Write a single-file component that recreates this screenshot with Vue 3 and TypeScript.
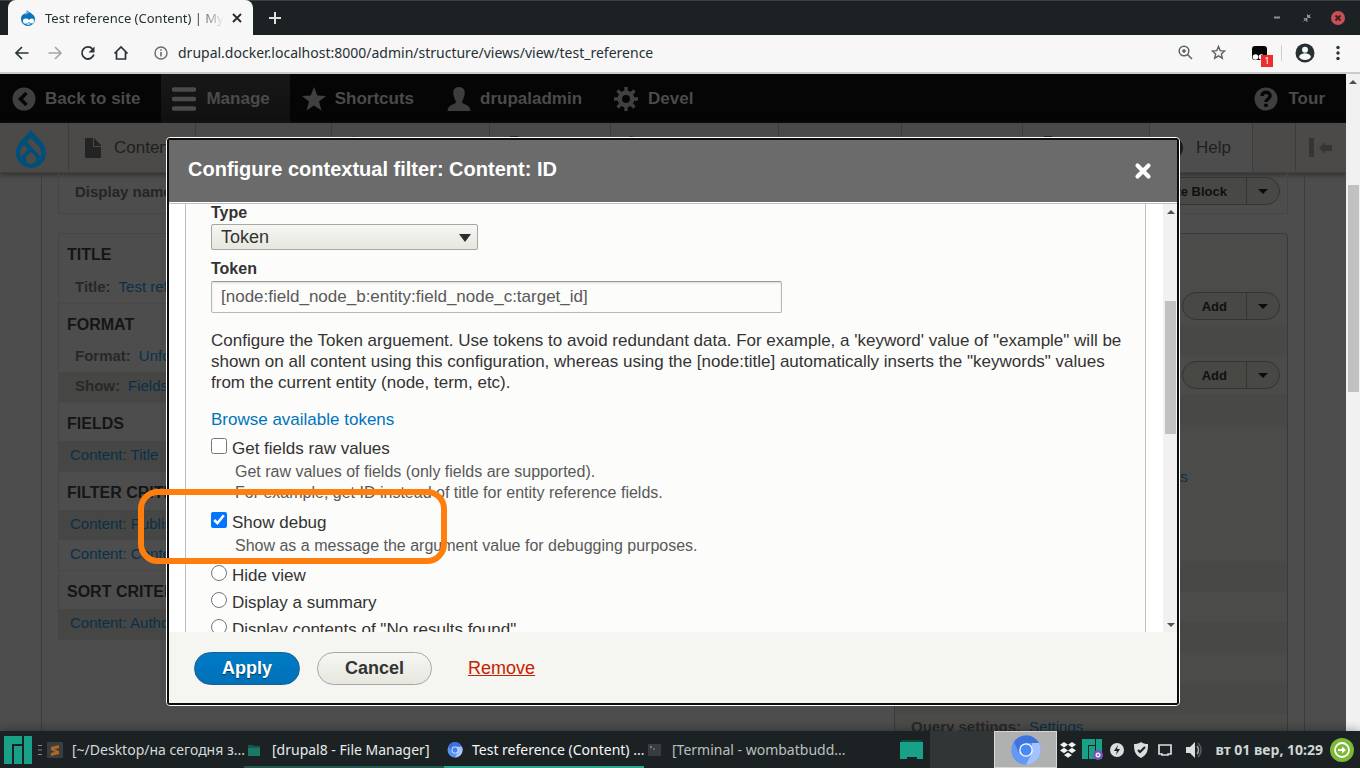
<script setup lang="ts">
import { ref } from 'vue'

interface Row { label?: string; link: string; shaded?: boolean }
interface Bucket { title: string; rows: Row[] }
interface Task { id: string; title: string; state: string }
interface TrayIcon { width: string; path: string }

const trayIcons: TrayIcon[] = [
  { width: 'w136', path: 'M7 3h6v5H7zM2 15h6v6H2zM12 15h6v6h-6zM9 8h2v7H9z' },
  { width: 'w158', path: 'M8 0l3 3 6 7-7 8-8-8z' },
  { width: 'w121', path: 'M6 0h8v4h5v17H1V4h5z' },
  { width: 'w168', path: 'M5 0c4 0 6 3 5 6l9 12-3 4L5 10C1 10 0 6 2 4l3 2z' },
  { width: 'w123', path: 'M10 1c5 0 5 8 2 11l7 4v5H1v-5l7-4C5 9 5 1 10 1z' },
  { width: 'w121', path: 'M2 9h4v12H2zM8 1h4v20H8zM14 5h4v16h-4z' },
  { width: 'w127', path: 'M7 0h8v4l4 4v13H1V8l6-4z' },
]

const buckets: Bucket[] = [
  { title: 'TITLE', rows: [{ label: 'Title:', link: 'Test reference' }] },
  {
    title: 'FORMAT',
    rows: [
      { label: 'Format:', link: 'Unformatted' },
      { label: 'Show:', link: 'Fields', shaded: true },
    ],
  },
  { title: 'FIELDS', rows: [{ link: 'Content: Title', shaded: true }] },
  {
    title: 'FILTER CRITERIA',
    rows: [{ link: 'Content: Published', shaded: true }, { link: 'Content: Content' }],
  },
  { title: 'SORT CRITERIA', rows: [{ link: 'Content: Authored', shaded: true }] },
]

const tasks: Task[] = [
  { id: 'sublime', title: '[~/Desktop/на сегодня з...', state: '' },
  { id: 'files', title: '[drupal8 - File Manager]', state: 'open' },
  { id: 'chromium', title: 'Test reference (Content) ...', state: 'active' },
  { id: 'terminal', title: '[Terminal - wombatbudd...', state: 'faded' },
]

const url = ref('drupal.docker.localhost:8000/admin/structure/views/view/test_reference')
const argumentType = ref('Token')
const token = ref('[node:field_node_b:entity:field_node_c:target_id]')
const rawValues = ref(false)
const showDebug = ref(true)
const fallback = ref('')
</script>

<template>
  <div class="screen">
    <header class="tabs">
      <div class="tab">
        <svg class="favicon" width="16" height="18" viewBox="0 0 16 18">
          <path d="M7 1c1 2 3 2 5 4 2 1 3 3 3 5a7 7 0 0 1-14 0c0-3 1-4 3-5s3-2 3-4z" fill="#0b73b9" />
          <path d="M7 1c0 2-1 3-3 4 2 1 4 0 5-2z" fill="#6fb7e4" />
          <path d="M3 12c0-3 4-3 6-1 2-2 5-2 5 1 0 4-4 2-5 1-2 2-6 3-6-1z" fill="#fff" />
          <path d="M6 15c2-1 4-1 5 0-2 1-4 1-5 0z" fill="#fff" />
        </svg>
        <span class="tab-title">Test reference (Content) | My</span>
        <button class="bare tab-close" aria-label="Close tab">
          <svg width="10" height="10" viewBox="0 0 10 10"><path d="M1 1l8 8M9 1L1 9" stroke="#222a2c" stroke-width="1.800" /></svg>
        </button>
      </div>
      <button class="bare new-tab" aria-label="New tab">
        <svg width="14" height="14" viewBox="0 0 14 14"><path d="M7 1v12M1 7h12" stroke="#dfe1e1" stroke-width="2" /></svg>
      </button>
      <div class="window-buttons">
        <button class="bare" aria-label="Minimize"><svg width="14" height="14" viewBox="0 0 14 14"><path d="M5 6.500h6" stroke="#8b9090" stroke-width="2" /></svg></button>
        <button class="bare" aria-label="Restore"><svg width="14" height="14" viewBox="0 0 14 14"><path d="M7.500 3.500v3h3zM4 7.500h3v3zM9 5l1.500-1.500M5 9l-1.500 1.500" fill="#8b9090" stroke="#8b9090" /></svg></button>
        <button class="bare" aria-label="Close"><svg width="14" height="14" viewBox="0 0 14 14"><circle cx="7" cy="7" r="7" fill="#c94f57" /><path d="M4.500 4.500l5 5M9.500 4.500l-5 5" stroke="#3a2225" stroke-width="2" /></svg></button>
      </div>
    </header>

    <nav class="address-bar">
      <button class="bare" aria-label="Back"><svg width="16" height="16" viewBox="0 0 16 16"><path d="M14.500 8H2M8 2L2 8l6 6" fill="none" stroke="#293437" stroke-width="1.700" /></svg></button>
      <button class="bare" aria-label="Forward"><svg width="16" height="16" viewBox="0 0 16 16"><path d="M1.500 8H14M8 2l6 6-6 6" fill="none" stroke="#a3a6a7" stroke-width="1.600" /></svg></button>
      <button class="bare" aria-label="Reload"><svg width="16" height="16" viewBox="0 0 16 16"><path d="M12.500 4A6 6 0 1 0 13.800 9.500" fill="none" stroke="#293437" stroke-width="1.800" /><path d="M14.500 1.500v6h-6z" fill="#293437" /></svg></button>
      <button class="bare" aria-label="Home"><svg width="16" height="16" viewBox="0 0 16 16"><path d="M1.500 8.500L8 2l6.500 6.500M3.500 7v7h9V7" fill="none" stroke="#293437" stroke-width="1.700" /></svg></button>
      <svg class="info" width="14" height="14" viewBox="0 0 14 14"><circle cx="7" cy="7" r="6" fill="none" stroke="#666c6e" stroke-width="1.400" /><path d="M7 3.200v1.500M7 6v4.500" stroke="#666c6e" stroke-width="1.600" /></svg>
      <input v-model="url" class="url" aria-label="Address" type="text" />
      <button class="bare zoom" aria-label="Zoom"><svg width="15" height="15" viewBox="0 0 15 15"><circle cx="6" cy="6" r="4.800" fill="none" stroke="#5b6163" stroke-width="1.500" /><path d="M9.500 9.500L14 14M6 4v4M4 6h4" stroke="#5b6163" stroke-width="1.500" /></svg></button>
      <button class="bare star" aria-label="Bookmark"><svg width="15" height="15" viewBox="0 0 15 15"><path d="M7.500 1.500l1.700 4.100 4.500.4-3.400 2.900 1 4.300-3.800-2.300-3.800 2.300 1-4.300L1.300 6l4.500-.4z" fill="none" stroke="#5b6163" stroke-width="1.400" /></svg></button>
      <button class="bare extension" aria-label="Extension, 1 notification">
        <svg width="16" height="16" viewBox="0 0 16 16"><rect x="1" y="1" width="15" height="14" rx="3" fill="#050505" /><circle cx="4.500" cy="12" r="2.800" fill="#fff" /><circle cx="10.500" cy="12" r="2.800" fill="#fff" /></svg>
        <span class="badge">1</span>
      </button>
      <span class="separator"></span>
      <button class="bare profile" aria-label="Profile"><svg width="20" height="20" viewBox="0 0 20 20"><circle cx="10" cy="10" r="9.500" fill="#263033" /><circle cx="10" cy="6.800" r="3" fill="#f7f7f7" /><path d="M4 14c1-5 11-5 12 0-2 4-10 4-12 0z" fill="#f7f7f7" /></svg></button>
      <button class="bare more" aria-label="Menu"><svg width="4" height="16" viewBox="0 0 4 16"><circle cx="2" cy="2.500" r="1.700" fill="#293437" /><circle cx="2" cy="8" r="1.700" fill="#293437" /><circle cx="2" cy="13.500" r="1.700" fill="#293437" /></svg></button>
    </nav>

    <div class="viewport">
      <div class="page">
        <nav class="admin-bar">
          <a href="#" class="back">
            <svg width="24" height="24" viewBox="0 0 24 24"><circle cx="12" cy="12" r="11.500" fill="#3f3f3f" /><path d="M14.500 6L8.500 12l6 6" fill="none" stroke="#050505" stroke-width="3.500" /></svg>
            Back to site
          </a>
          <a href="#" class="manage">
            <svg width="24" height="24" viewBox="0 0 24 24"><path d="M2 2.500h20M2 12h20M2 21.500h20" stroke="#4b4b4b" stroke-width="4.500" stroke-linecap="round" /></svg>
            Manage
          </a>
          <a href="#" class="shortcuts">
            <svg width="24" height="24" viewBox="0 0 24 24"><path d="M12 0l3.300 8.500 8.700.4-7 5.600 2.500 9L12 18.500 4.500 23.500l2.500-9L0 8.900l8.700-.4z" fill="#404040" /></svg>
            Shortcuts
          </a>
          <a href="#" class="user">
            <svg width="24" height="24" viewBox="0 0 24 24"><path d="M12 0c5 0 6.500 4 5.500 8-.5 3-2 5-2.500 7 1 3 8 2 8.500 9H.5C1 17 8 18 9 15c-.5-2-2-4-2.500-7C5.500 4 7 0 12 0z" fill="#3d3d3d" /></svg>
            drupaladmin
          </a>
          <a href="#" class="devel">
            <svg width="24" height="24" viewBox="0 0 24 24">
              <circle cx="12" cy="12" r="6.200" fill="none" stroke="#404040" stroke-width="4.500" />
              <path d="M12 0v5M12 19v5M0 12h5M19 12h5M3.500 3.500L7 7M17 17l3.500 3.500M3.500 20.500L7 17M17 7l3.500-3.500" stroke="#404040" stroke-width="3.400" />
            </svg>
            Devel
          </a>
          <a href="#" class="tour">
            <svg width="24" height="24" viewBox="0 0 24 24"><circle cx="12" cy="12" r="11.500" fill="#3f3f3f" /><path d="M8 9c0-5 8.500-5 8 0 0 3-4 3-4 6" fill="none" stroke="#050505" stroke-width="3.400" /><path d="M10.200 16.800h3.600v3h-3.600z" fill="#050505" /></svg>
            Tour
          </a>
        </nav>

        <nav class="tray">
          <a href="#" class="tray-logo" aria-label="Drupal">
            <svg width="32" height="40" viewBox="0 0 32 40">
              <path d="M16 0c1 6 15 11 15 24a15 15 0 0 1-30 0C1 11 15 6 16 0z" fill="#004f78" />
              <path d="M16 9c3 4 10 8 10 15v4L12 13z" fill="#4b4a48" />
              <path d="M9 16c-5 5-4 9-3 12l7-8z" fill="#4b4a48" />
              <path d="M16 23l4 4c3 4 0 8-4 8s-7-4-4-8z" fill="#4b4a48" />
            </svg>
          </a>
          <a href="#" class="tray-item content">
            <svg width="18" height="22" viewBox="0 0 18 22"><path d="M1 1h8v9h8v10a1 1 0 0 1-1 1H2a1 1 0 0 1-1-1z" fill="#232323" /><path d="M10 1l7 7v1h-7z" fill="#232323" /></svg>
            Content
          </a>
          <span v-for="(icon, index) in trayIcons" :key="index" class="tray-item icon-only" :class="icon.width">
            <svg width="20" height="24" viewBox="0 0 20 24"><path :d="icon.path" fill="#232323" /></svg>
          </span>
          <a href="#" class="tray-item help">
            <svg width="24" height="24" viewBox="0 0 24 24"><circle cx="12" cy="12" r="11" fill="#1c1c1c" /></svg>
            Help
          </a>
          <button class="bare orientation" aria-label="Vertical orientation"><svg width="24" height="20" viewBox="0 0 24 20"><path d="M0 0h5v19H0z" fill="#353535" /><path d="M10 10l6-6v3h7v6h-7v3z" fill="#353535" /></svg></button>
        </nav>

        <main class="paper">
          <div class="display-name">
            <strong>Display name:</strong>
            <div class="split"><button>Duplicate Block</button><button class="caret" aria-label="More actions"></button></div>
          </div>
          <div class="columns">
            <section class="left">
              <template v-for="bucket in buckets" :key="bucket.title">
                <h3>{{ bucket.title }}</h3>
                <div v-for="row in bucket.rows" :key="row.link" class="row" :class="{ shaded: row.shaded, labelled: row.label }">
                  <b v-if="row.label">{{ row.label }}</b><a href="#">{{ row.link }}</a>
                </div>
              </template>
            </section>
            <section class="right">
              <div class="head tall"><div class="split"><button>Add</button><button class="caret" aria-label="More actions"></button></div></div>
              <div class="row shaded"></div>
              <div class="head"><div class="split"><button>Add</button><button class="caret" aria-label="More actions"></button></div></div>
              <div class="row shaded"></div>
              <div class="head"></div>
              <div class="row tail"><a href="#">arguments</a></div>
              <div class="head"></div>
              <div class="row"></div>
              <div class="row shaded"></div>
              <div class="row"></div>
              <div class="row shaded"></div>
              <div class="row"></div>
              <div class="row shaded"></div>
              <div class="row query"><b>Query settings:</b><a href="#">Settings</a></div>
            </section>
          </div>
        </main>

        <section class="dialog" role="dialog" aria-labelledby="dialog-title">
          <div class="dialog-frame">
            <header class="dialog-title">
              <h2 id="dialog-title">Configure contextual filter: Content: ID</h2>
              <button class="bare" aria-label="Close"><svg width="18" height="18" viewBox="0 0 18 18"><path d="M3.500 3.500l11 11M14.500 3.500l-11 11" stroke="#fff" stroke-width="4.200" stroke-linecap="round" /></svg></button>
            </header>
            <div class="dialog-body">
              <form class="fields" @submit.prevent>
                <label class="field-label first" for="type">Type</label>
                <div class="select-wrap">
                  <select id="type" v-model="argumentType"><option>Token</option></select>
                </div>
                <label class="field-label" for="token">Token</label>
                <input id="token" v-model="token" class="token" type="text" />
                <p class="help-text">
                  Configure the Token arguement. Use tokens to avoid redundant data. For example, a 'keyword' value of "example" will be<br />
                  shown on all content using this configuration, whereas using the [node:title] automatically inserts the "keywords" values<br />
                  from the current entity (node, term, etc).
                </p>
                <a href="#" class="browse">Browse available tokens</a>
                <label class="option"><input v-model="rawValues" type="checkbox" />Get fields raw values</label>
                <p class="description">Get raw values of fields (only fields are supported).<br />For example, get ID instead of title for entity reference fields.</p>
                <label class="option after"><input v-model="showDebug" type="checkbox" />Show debug</label>
                <p class="description">Show as a message the argument value for debugging purposes.</p>
                <label class="option after"><input v-model="fallback" type="radio" name="fallback" value="hide" />Hide view</label>
                <label class="option radio"><input v-model="fallback" type="radio" name="fallback" value="summary" />Display a summary</label>
                <label class="option radio"><input v-model="fallback" type="radio" name="fallback" value="empty" />Display contents of "No results found"</label>
              </form>
              <div class="scrollbar inner"><span class="arrow up"></span><span class="thumb"></span><span class="arrow down"></span></div>
            </div>
            <footer class="dialog-footer">
              <button class="pill primary">Apply</button>
              <button class="pill">Cancel</button>
              <a href="#" class="remove">Remove</a>
            </footer>
          </div>
        </section>
        <div class="marker"></div>
      </div>
      <div class="scrollbar outer"><span class="arrow up"></span><span class="thumb"></span></div>
    </div>

    <footer class="taskbar">
      <button class="bare start" aria-label="Applications"><svg width="28" height="28" viewBox="0 0 28 28"><path d="M0 0h18v8H8v20H0zM10 10h8v18h-8zM20 0h8v28h-8z" fill="#18a186" /></svg></button>
      <svg class="handle" width="4" height="10" viewBox="0 0 4 10"><path d="M0 .5h4M0 5h4M0 9.500h4" stroke="#858a8b" /></svg>
      <button v-for="task in tasks" :key="task.id" class="bare task" :class="task.state">
        <svg v-if="task.id === 'sublime'" width="16" height="16" viewBox="0 0 16 16"><rect width="16" height="16" rx="1" fill="#393d3f" /><path d="M12 3v3L7.500 7.500 12 9v3l-8 2v-3l4-1.300L4 8V5z" fill="#ab6a20" /></svg>
        <svg v-else-if="task.id === 'files'" width="16" height="16" viewBox="0 0 16 16"><path d="M1 3h5l1 1h6v10H1z" fill="#115a4c" /><path d="M1 6h12v8H1z" fill="#1b7766" /></svg>
        <svg v-else-if="task.id === 'chromium'" width="16" height="16" viewBox="0 0 30 30"><circle cx="15" cy="15" r="14" fill="#5a91f5" /><path d="M2 9A14 14 0 0 1 28 9H15a6 6 0 0 0-5 9z" fill="#4170dd" /><path d="M28 9a14 14 0 0 1-13 20l5-10V9z" fill="#a4c3fb" /><circle cx="15" cy="15" r="6.500" fill="#eef4ff" /><circle cx="15" cy="15" r="5" fill="#4582ef" /></svg>
        <svg v-else width="16" height="16" viewBox="0 0 16 16"><rect x="1" y="2" width="13" height="12" fill="#383c3e" /><path d="M3 4l2 1-2 1M6 7h2" fill="none" stroke="#8b8f90" /></svg>
        <span>{{ task.title }}</span>
      </button>
      <button class="bare desktop" aria-label="Show desktop"><svg width="24" height="20" viewBox="0 0 24 20"><path d="M0 2h23v17h-6v-2H7v2H0z" fill="#18a186" /><path d="M1 0h21v2H1z" fill="#0e4a40" /></svg></button>
      <span class="workspace"></span>
      <button class="bare workspace current" aria-label="Chromium workspace">
        <svg width="30" height="30" viewBox="0 0 30 30"><circle cx="15" cy="15" r="14.700" fill="#6399f5" /><path d="M3 7A14.700 14.700 0 0 1 28 8H15l-7 10z" fill="#4072db" /><path d="M28 8a14.700 14.700 0 0 1-13 21.700L21 18V8z" fill="#a2c3fb" /><circle cx="15" cy="15" r="6.800" fill="#fff" /><circle cx="15" cy="15" r="5.500" fill="#4789f5" /></svg>
      </button>
      <div class="status">
        <svg width="18" height="18" viewBox="0 0 18 18"><path d="M5 1l4 2.700-4 2.700-4-2.700zM13 1l4 2.700-4 2.700-4-2.700zM5 6.800l4 2.700-4 2.700-4-2.700zM13 6.800l4 2.700-4 2.700-4-2.700zM9 11.500l4 2.500-4 2.700L5 14z" fill="#f2f2f2" /></svg>
        <svg width="22" height="22" viewBox="0 0 22 22"><path d="M0 0h13v6H6v14H0zM7 7h6v13H7zM14 0h6v20h-6z" fill="#18a186" /><circle cx="16" cy="16" r="5" fill="#7653c0" /><circle cx="16" cy="16" r="2.500" fill="#eee" /><circle cx="16" cy="16" r="1" fill="#7653c0" /></svg>
        <svg width="16" height="16" viewBox="0 0 16 16"><circle cx="8" cy="8" r="7" fill="#dcdddd" /><path d="M9 3L5 9h3l-1 4 4-6H8z" fill="#1c2224" /></svg>
        <svg width="16" height="16" viewBox="0 0 16 16"><path d="M8 0c2 1.500 4 2 7 2 0 7-1 11-7 14C2 13 1 9 1 2c3 0 5-.5 7-2z" fill="#dcdddd" /><path d="M5 8l2 2 5-5" fill="none" stroke="#1c2224" stroke-width="2" /></svg>
        <svg width="16" height="14" viewBox="0 0 16 14"><path d="M2 2h12v9h-3v1H5v-1H2z" fill="none" stroke="#dcdddd" stroke-width="1.700" /></svg>
        <svg class="volume" width="18" height="18" viewBox="0 0 18 18"><path d="M1 6h4l5-5v16l-5-5H1z" fill="#dcdddd" /><path d="M12 5c2 2 2 6 0 8" fill="none" stroke="#aaa" stroke-width="1.500" /><path d="M13 2c4 4 4 10 0 14" fill="none" stroke="#575d5f" stroke-width="1.500" /></svg>
      </div>
      <time class="clock">вт 01 вер, 10:29</time>
      <button class="bare leave" aria-label="Log out"><svg width="24" height="24" viewBox="0 0 24 24"><circle cx="12" cy="12" r="12" fill="#7cb935" /><circle cx="12" cy="12" r="7" fill="none" stroke="#fff" stroke-width="1.800" /><path d="M8 11h4V8.500l4 3.500-4 3.500V13H8z" fill="#fff" /></svg></button>
    </footer>
  </div>
</template>

<style>
html,
body {
  margin: 0;
  overflow: hidden;
}
</style>

<style scoped>
* {
  box-sizing: border-box;
}

.screen {
  display: flex;
  flex-direction: column;
  height: 100vh;
  font-family: "Liberation Sans", Arial, sans-serif;
  overflow: hidden;
}

svg {
  display: block;
  flex: none;
}

a {
  text-decoration: none;
}

h2,
h3,
p {
  margin: 0;
}

.bare {
  display: flex;
  align-items: center;
  justify-content: center;
  flex: none;
  padding: 0;
  border: 0;
  background: none;
}

/* Browser window */
.tabs {
  display: flex;
  align-items: center;
  flex: none;
  height: 35px;
  padding-left: 8px;
  border-top: 1px solid #3a4244;
  background: #1c2224;
  font-family: "Noto Sans", sans-serif;
}

.tab {
  display: flex;
  align-items: center;
  width: 245px;
  height: 35px;
  margin-top: -1px;
  padding: 0 11px 0 12px;
  border-radius: 8px 8px 0 0;
  background: #f7f7f7;
  color: #273033;
  font-size: 13px;
}

.tab-title {
  flex: 1;
  margin: 0 8px 0 9px;
  overflow: hidden;
  white-space: nowrap;
  mask-image: linear-gradient(to right, #000 84%, transparent);
}

.new-tab {
  margin-left: 15px;
}

.window-buttons {
  display: flex;
  gap: 17px;
  margin: 0 15px 0 auto;
}

.address-bar {
  display: flex;
  align-items: center;
  flex: none;
  height: 39px;
  padding: 0 20px 2px 14px;
  border-bottom: 2px solid #ccc;
  background: #f7f7f7;
}

.address-bar > .bare {
  margin-right: 17px;
}

.info {
  margin: 0 10px 0 8px;
}

.url {
  flex: 1;
  min-width: 0;
  padding: 0;
  border: 0;
  outline: 0;
  background: none;
  color: #273033;
  font: 14px/20px "Noto Sans", sans-serif;
}

.address-bar > .zoom {
  margin-right: 18px;
}

.address-bar > .star {
  margin-right: 25px;
}

.address-bar > .extension {
  position: relative;
  margin-right: 14px;
}

.badge {
  position: absolute;
  top: 10px;
  left: 10px;
  width: 12px;
  height: 12px;
  background: #ef2d2d;
  color: #fff;
  font: 9px/12px "Noto Sans", sans-serif;
}

.separator {
  width: 1px;
  height: 16px;
  background: #cfcfcf;
}

.address-bar > .profile {
  margin: 0 21px 0 13px;
}

.address-bar > .more {
  margin-right: 0;
}

.viewport {
  display: flex;
  flex: 1;
  min-height: 0;
}

.page {
  position: relative;
  display: flex;
  flex-direction: column;
  flex: 1;
  min-width: 0;
  overflow: hidden;
  background: #4d4d4d;
}

/* Administration toolbar */
.admin-bar {
  display: flex;
  flex: none;
  height: 49px;
  background: #050505;
  font-size: 17px;
  font-weight: bold;
}

.admin-bar a {
  display: flex;
  align-items: center;
  gap: 9px;
  padding: 0 21px 0 12px;
  color: #4b4b4b;
}

.admin-bar .manage {
  gap: 10px;
  margin-right: 12px;
  padding: 0 20px 0 11px;
  background: linear-gradient(#181818, #101010);
}

.admin-bar .shortcuts {
  padding-left: 0;
  padding-right: 33px;
}

.admin-bar .user {
  padding-left: 0;
  padding-right: 32px;
}

.admin-bar .devel {
  gap: 10px;
  padding-left: 0;
}

.admin-bar .tour {
  gap: 10px;
  margin-left: auto;
  padding-right: 21px;
}

.tray {
  display: flex;
  flex: none;
  height: 50px;
  border-bottom: 1px solid #3f3f3f;
  background: #4b4a48;
  box-shadow: 0 2px 5px #303030;
  font-size: 17px;
}

.tray-logo {
  width: 69px;
  padding: 6px 0 0 15px;
  border-right: 1px solid #3d3d3c;
}

.tray-item {
  display: flex;
  align-items: center;
  gap: 12px;
  flex: none;
  border-right: 1px solid #3d3d3c;
  color: #202020;
}

.icon-only {
  padding-left: 14px;
}

.content {
  width: 127px;
  padding-left: 15px;
}

.w136 { width: 136px; }
.w158 { width: 158px; }
.w121 { width: 121px; }
.w168 { width: 168px; }
.w123 { width: 123px; }
.w127 { width: 127px; }

.help {
  width: 103px;
  padding-left: 10px;
  background: #4d4d4d;
}

.orientation {
  width: 51px;
  margin-left: auto;
  border-left: 1px solid #3d3d3c;
}

/* Views editor */
.paper {
  flex: 1;
  min-height: 0;
  margin: 0 41px;
  padding: 0 16px;
  border: solid #3c3c3c;
  border-width: 0 1px;
  overflow: hidden;
  font-size: 15px;
}

.display-name {
  display: flex;
  align-items: center;
  justify-content: space-between;
  height: 41px;
  padding: 0 7px 4px 16px;
  border: solid #464646;
  border-width: 0 1px 1px;
  color: #252525;
}

.split {
  display: flex;
  height: 28px;
  border: 1px solid #343433;
  border-radius: 14px;
  background: #484845;
}

.split button {
  padding: 0 19px;
  border: 0;
  background: none;
  color: #101010;
  font: bold 13px "Liberation Sans", Arial, sans-serif;
}

.split .caret {
  display: grid;
  place-items: center;
  width: 33px;
  padding: 0;
  border-left: 1px solid #343433;
}

.caret::after {
  content: "";
  border: 5px solid transparent;
  border-top-color: #0c0c0c;
  border-bottom: 0;
}

.columns {
  display: flex;
  align-items: flex-start;
  justify-content: space-between;
  margin-top: 19px;
}

.left {
  width: 270px;
  border: 1px solid #464646;
}

.left h3 {
  height: 39px;
  padding-left: 8px;
  color: #151515;
  font-size: 16px;
  line-height: 42px;
}

.row + h3 {
  border-top: 1px solid #484848;
}

.row {
  height: 30px;
  padding-left: 11px;
  line-height: 28px;
  white-space: nowrap;
}

.row.labelled {
  padding-left: 16px;
}

.row b {
  margin-right: 8px;
  color: #282828;
}

.row a {
  color: #0a3048;
}

.row.shaded {
  background: #464644;
}

.right {
  width: 394px;
  border: 1px solid #393939;
  border-radius: 4px 4px 0 0;
  background: #4b4b49;
}

.right .row {
  height: 30px;
}

.right .row.shaded {
  height: 31px;
  background: #484846;
}

.head {
  display: flex;
  align-items: flex-end;
  justify-content: flex-end;
  height: 38px;
  padding: 0 7px 5px 0;
}

.head.tall {
  height: 91px;
}

.right .tail {
  padding-left: 222px;
}

.right .query {
  padding-left: 16px;
  line-height: 26px;
}

/* Dialog */
.dialog {
  position: absolute;
  inset: 63px 166px 25px;
  border: 1px solid #fff;
  border-radius: 4px;
  background: #0c0c0c;
}

.dialog-frame {
  display: flex;
  flex-direction: column;
  height: 100%;
  border: 2px solid #0c0c0c;
  border-radius: 4px;
}

.dialog-title {
  display: flex;
  align-items: center;
  justify-content: space-between;
  flex: none;
  height: 63px;
  padding: 0 25px 5px 19px;
  border-bottom: 1px solid #fff;
  background: #6b6b6b;
}

.dialog-title h2 {
  color: #fff;
  font-size: 20px;
  line-height: 26px;
}

.dialog-title .bare {
  margin-top: 4px;
}

.dialog-body {
  display: flex;
  flex: 1;
  min-height: 0;
  padding-left: 16px;
  border-top: 1px solid #bfbfbf;
  background: #fff;
  color: #333;
  font-size: 17px;
  line-height: 21px;
  overflow: hidden;
}

.fields {
  display: flex;
  flex-direction: column;
  align-items: flex-start;
  flex: 1;
  height: 460px;
  margin-right: 17px;
  padding-left: 25px;
  border: solid #bfbfbf;
  border-width: 0 1px;
  background: #fcfcfa;
}

.field-label {
  margin: 10px 0 3px;
  font-size: 16px;
  font-weight: bold;
  line-height: 18px;
}

.field-label.first {
  margin: 0 0 2px;
}

.select-wrap {
  position: relative;
  width: 267px;
}

.select-wrap::after {
  content: "";
  position: absolute;
  top: 10px;
  right: 7px;
  border: 6px solid transparent;
  border-top: 8px solid #2d2d2d;
  border-bottom: 0;
  pointer-events: none;
}

select {
  display: block;
  width: 100%;
  height: 26px;
  padding: 0 9px;
  appearance: none;
  border: 1px solid #a6a6a6;
  border-radius: 2px;
  background: linear-gradient(#f6f6f3, #e7e7df);
  color: #333;
  font: 18px "Liberation Sans", Arial, sans-serif;
}

.token {
  width: 571px;
  height: 32px;
  padding: 0 9px;
  border: 1px solid #b8b8b8;
  border-top-color: #999;
  border-radius: 2px;
  background: #fcfcfa;
  box-shadow: inset 0 1px 2px #0002;
  color: #595959;
  font: 17px "Liberation Sans", Arial, sans-serif;
}

.help-text {
  margin: 17px 0 16px;
  white-space: nowrap;
}

.browse {
  margin-bottom: 8px;
  color: #0074bd;
}

.option {
  display: flex;
  gap: 5px;
}

.option.after {
  margin-top: 9px;
}

.option.radio {
  margin-top: 6px;
}

.option input {
  width: 16px;
  height: 16px;
  margin: 0;
}

.description {
  margin: 2px 0 0 24px;
  color: #595959;
  font-size: 16px;
}

.dialog-footer {
  display: flex;
  align-items: center;
  flex: none;
  height: 71px;
  padding: 2px 0 0 25px;
  background: #f5f6f1;
  font-size: 18px;
}

.pill {
  height: 33px;
  margin-right: 17px;
  padding: 0 27px;
  border: 1px solid #a6a6a6;
  border-radius: 17px;
  background: linear-gradient(#f6f6f3, #e7e7df);
  color: #333;
  font: bold 18px "Liberation Sans", Arial, sans-serif;
}

.pill.primary {
  border-color: #1e5c90;
  background: linear-gradient(#007bc6, #0071b8);
  color: #fff;
  text-shadow: 0 1px 1px #0008;
}

.remove {
  margin-left: 19px;
  color: #c72100;
  text-decoration: underline;
}

.marker {
  position: absolute;
  top: 415px;
  left: 138px;
  width: 309px;
  height: 75px;
  border: 6px solid #ff7f0e;
  border-radius: 20px;
  pointer-events: none;
}

/* Scrollbars */
.scrollbar {
  display: flex;
  flex-direction: column;
  align-items: center;
  flex: none;
  padding: 6px 0 5px;
  background: #f1f1f1;
}

.outer {
  width: 14px;
}

.inner {
  width: 15px;
  margin-right: -1px;
}

.arrow {
  border: 4px solid transparent;
}

.up {
  border-top: 0;
  border-bottom-color: #505050;
}

.down {
  margin-top: auto;
  border-bottom: 0;
  border-top-color: #505050;
}

.thumb {
  width: 11px;
  background: #c1c1c1;
}

.inner .thumb {
  height: 133px;
  margin-top: 87px;
}

.outer .thumb {
  height: 207px;
  margin-top: 101px;
}

/* Desktop panel */
.taskbar {
  display: flex;
  align-items: center;
  flex: none;
  height: 37px;
  padding-left: 4px;
  background: #1c2224;
  box-shadow: 0 0 10px #0006;
  font-family: "Noto Sans", sans-serif;
  font-size: 14px;
  z-index: 1;
}

.handle {
  margin: 0 2px 0 6px;
}

.task {
  width: 200px;
  height: 37px;
  padding: 2px 0 0 3px;
  border-bottom: 2px solid transparent;
  color: #d3dad9;
  font: inherit;
  justify-content: flex-start;
  gap: 9px;
  white-space: nowrap;
}

.task.open {
  border-color: #22574e;
  color: #e6ebea;
}

.task.active {
  border-color: #2ba78f;
  color: #f5f7f7;
}

.task.faded {
  color: #b9c0bf;
}

.desktop {
  margin: 0 6px 0 auto;
}

.workspace {
  width: 64px;
  height: 37px;
  background: #323536;
}

.workspace.current {
  width: 63px;
  border: 1px solid #d5dad8;
  background: #afb1b0;
}

.status {
  display: flex;
  align-items: center;
  gap: 8px;
  padding-left: 2px;
}

.status .volume {
  margin-left: 4px;
}

.status svg:nth-child(2) {
  margin: 0 -3px;
}

.clock {
  margin-left: 12px;
  color: #cdd6d5;
  font-weight: bold;
  white-space: nowrap;
}

.leave {
  margin: 0 6px 0 7px;
}
</style>
